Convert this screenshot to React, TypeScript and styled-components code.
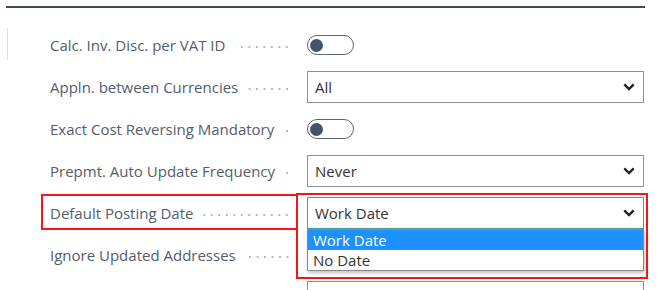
import * as React from 'react';
import styled, { createGlobalStyle } from 'styled-components';

const GlobalStyle = createGlobalStyle`
    html, body {
        margin: 0;
        padding: 0;
        background: #fff;
        overflow: hidden;
    }
    body {
        font-family: "Open Sans", "Noto Sans", sans-serif;
        font-size: 15px;
    }
`

const Panel = styled.div`
    width: 639px;
    margin: 6px 0 0 6px;
    border-top: 2px solid #3d4a5a;
`
const Content = styled.div`
    display: flex;
    padding-top: 16px;
`
const Marker = styled.div`
    flex-shrink: 0;
    width: 1px;
    height: 32px;
    margin: 4px 0 0 1px;
    background: #dcdcdc;
`
const Form = styled.div`
    margin-left: 42px;
    display: flex;
    flex-direction: column;
`
const Row = styled.div`
    display: grid;
    grid-template-columns: 243px 337px;
    column-gap: 14px;
    height: 42px;
    align-items: center;
`
const LabelCell = styled.div`
    position: relative;
    display: flex;
    align-items: center;
    height: 100%;
`
const LabelText = styled.span`
    color: #535d6b;
    white-space: nowrap;
`
const Leader = styled.span`
    flex: 1;
    height: 2px;
    margin: 3px 2px 0 10px;
    background-image: radial-gradient(circle, #b4b8be 0.8px, transparent 1.2px);
    background-size: 7.5px 2px;
    background-repeat: repeat-x;
    background-position: right center;
`
const ControlCell = styled.div`
    position: relative;
    display: flex;
    align-items: center;
    height: 100%;
`
const Toggle = styled.div`
    box-sizing: border-box;
    width: 47px;
    height: 20px;
    border: 1.5px solid #5d6673;
    border-radius: 10px;
    display: flex;
    align-items: center;
    padding-left: 2px;
`
const Knob = styled.span`
    width: 13px;
    height: 13px;
    border-radius: 50%;
    background: #45536a;
`
const Select = styled.div<{ $focused?: boolean }>`
    box-sizing: border-box;
    width: 100%;
    height: 32px;
    border: 1px solid ${p => (p.$focused ? '#4f9d98' : '#8d9197')};
    display: flex;
    align-items: center;
    justify-content: space-between;
    padding: 0 8px 0 7px;
    color: #333;
`
const Chevron = styled.svg`
    width: 12px;
    height: 8px;
`
const Menu = styled.ul`
    position: absolute;
    top: 37px;
    left: 0;
    right: 0;
    margin: 0;
    padding: 0;
    list-style: none;
    background: #fff;
    border: 1px solid #8a8a8a;
    box-shadow: 1px 2px 4px rgba(0, 0, 0, 0.25);
    z-index: 2;
`
const MenuItem = styled.li<{ $active?: boolean }>`
    height: 20px;
    line-height: 20px;
    padding-left: 5px;
    color: ${p => (p.$active ? '#fff' : '#333')};
    background: ${p => (p.$active ? '#1e90ff' : '#fff')};
`
const Highlight = styled.div<{ $l: number; $r: number; $t: number; $h: number }>`
    position: absolute;
    left: ${p => p.$l}px;
    right: ${p => p.$r}px;
    top: ${p => p.$t}px;
    height: ${p => p.$h}px;
    border: 2px solid #f2161c;
    box-sizing: border-box;
    pointer-events: none;
    z-index: 3;
`

const ChevronIcon = () => (
    <Chevron viewBox="0 0 12 8">
        <polyline points="1.3,1.4 6,6 10.7,1.4" fill="none" stroke="#222" strokeWidth="2.4" />
    </Chevron>
)

type Field = {
    label: string,
    kind: 'toggle' | 'select',
    value?: string,
}

const fields: Field[] = [
    { label: 'Calc. Inv. Disc. per VAT ID', kind: 'toggle' },
    { label: 'Appln. between Currencies', kind: 'select', value: 'All' },
    { label: 'Exact Cost Reversing Mandatory', kind: 'toggle' },
    { label: 'Prepmt. Auto Update Frequency', kind: 'select', value: 'Never' },
    { label: 'Default Posting Date', kind: 'select', value: 'Work Date' },
    { label: 'Ignore Updated Addresses', kind: 'toggle' },
    { label: '', kind: 'select', value: '' },
]

const OPEN_ROW = 4

export default function App() {
    return (
        <>
            <GlobalStyle />
            <Panel>
                <Content>
                    <Marker />
                    <Form>
                        {fields.map((f, i) => (
                            <Row key={i}>
                                <LabelCell>
                                    <LabelText>{f.label}</LabelText>
                                    {f.label && <Leader />}
                                    {i === OPEN_ROW && <Highlight $l={-9} $r={-5} $t={2} $h={36} />}
                                </LabelCell>
                                <ControlCell>
                                    {f.kind === 'toggle' ? (
                                        <Toggle><Knob /></Toggle>
                                    ) : (
                                        <Select $focused={i === OPEN_ROW}>
                                            <span>{f.value}</span>
                                            <ChevronIcon />
                                        </Select>
                                    )}
                                    {i === OPEN_ROW && (
                                        <>
                                            <Menu>
                                                <MenuItem $active>Work Date</MenuItem>
                                                <MenuItem>No Date</MenuItem>
                                            </Menu>
                                            <Highlight $l={-11} $r={-4} $t={1} $h={86} />
                                        </>
                                    )}
                                </ControlCell>
                            </Row>
                        ))}
                    </Form>
                </Content>
            </Panel>
        </>
    )
}
